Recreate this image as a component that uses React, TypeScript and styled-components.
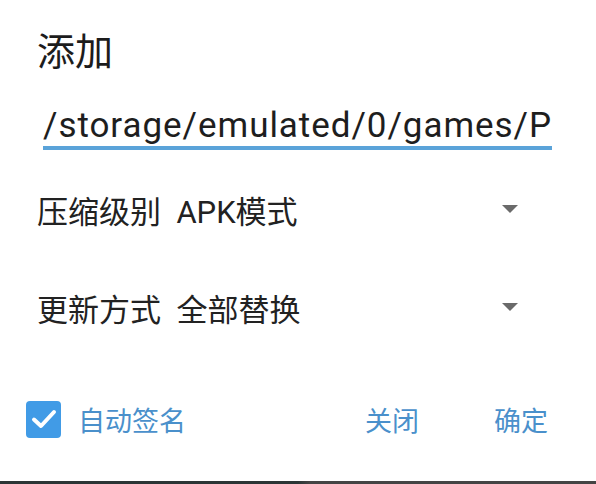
import React from 'react';
import styled, { createGlobalStyle } from 'styled-components';

const GlobalStyle = createGlobalStyle`
  html, body {
    margin: 0;
    padding: 0;
    background: #fff;
  }
  body {
    font-family: Roboto, "Noto Sans CJK SC", sans-serif;
  }
`;

const Dialog = styled.div`
  width: 596px;
  height: 484px;
  display: flex;
  flex-direction: column;
  background: #fff;
  overflow: hidden;
  box-sizing: border-box;
`;

const Title = styled.h2`
  margin: 0;
  padding: 29px 0 0 37px;
  height: 40px;
  font-family: "Noto Sans CJK SC", sans-serif;
  font-size: 38px;
  line-height: 40px;
  font-weight: 400;
  color: #1c1c1c;
`;

const PathField = styled.div`
  margin: 37px 44px 0 43px;
  border-bottom: 4px solid #5aa3d9;
  height: 40px;
  font-family: Roboto, "Noto Sans CJK SC", sans-serif;
  font-size: 35px;
  letter-spacing: 0.95px;
  line-height: 40px;
  color: #1e1e1e;
  white-space: nowrap;
  overflow: hidden;
`;

const OptionList = styled.div`
  display: flex;
  flex-direction: column;
  margin-top: 10px;
  padding: 0 78px 0 37px;
`;

const OptionRow = styled.div`
  display: flex;
  align-items: center;
  justify-content: space-between;
  height: 98px;
`;

const OptionLabel = styled.span`
  font-family: Roboto, "Noto Sans CJK SC", sans-serif;
  font-size: 31px;
  color: #222;
  white-space: pre;
`;

const Caret = styled.span`
  width: 0;
  height: 0;
  border-left: 8px solid transparent;
  border-right: 8px solid transparent;
  border-top: 8px solid #6a6a6a;
`;

const Footer = styled.div`
  display: flex;
  align-items: center;
  height: 40px;
  margin-top: 43px;
  padding: 0 48px 0 26px;
`;

const CheckLabel = styled.label`
  display: flex;
  align-items: center;
  gap: 17px;
  flex: 1;
`;

const CheckBox = styled.span`
  width: 35px;
  height: 37px;
  border-radius: 4px;
  background: #419be6;
  display: flex;
  align-items: center;
  justify-content: center;
`;

const BlueText = styled.span<{ $gap?: number }>`
  font-family: "Noto Sans CJK SC", sans-serif;
  font-size: 27px;
  color: #4a90cb;
  margin-left: ${(p) => p.$gap ?? 0}px;
`;

const Spacer = styled.div`
  flex: 1;
`;

const BottomEdge = styled.div`
  height: 3px;
  background: linear-gradient(90deg, #2b3535 0%, #2b3535 50%, #444 52%, #444 100%);
`;

const options = [
  { label: '压缩级别  APK模式' },
  { label: '更新方式  全部替换' },
];

export default function App(): JSX.Element {
  return (
    <>
      <GlobalStyle />
      <Dialog>
        <Title>添加</Title>
        <PathField>/storage/emulated/0/games/P</PathField>
        <OptionList>
          {options.map((o) => (
            <OptionRow key={o.label}>
              <OptionLabel>{o.label}</OptionLabel>
              <Caret />
            </OptionRow>
          ))}
        </OptionList>
        <Footer>
          <CheckLabel>
            <CheckBox>
              <svg width="26" height="22" viewBox="0 0 26 22">
                <path d="M3 11.5 L10 18 L23 4" fill="none" stroke="#fff" strokeWidth="4" strokeLinecap="round" strokeLinejoin="round" />
              </svg>
            </CheckBox>
            <BlueText>自动签名</BlueText>
          </CheckLabel>
          <BlueText>关闭</BlueText>
          <BlueText $gap={75}>确定</BlueText>
        </Footer>
        <Spacer />
        <BottomEdge />
      </Dialog>
    </>
  );
}
